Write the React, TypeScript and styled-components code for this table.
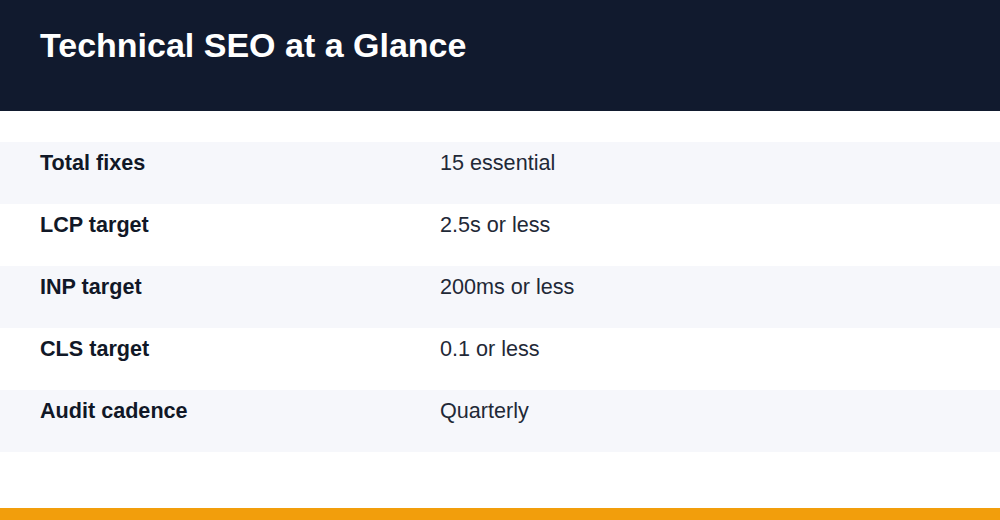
import React from "react";
import styled, { createGlobalStyle } from "styled-components";

const Global = createGlobalStyle`
  html, body { margin: 0; padding: 0; background: #ffffff; }
  body { font-family: "Liberation Sans", Arial, sans-serif; }
`;

const Page = styled.div`
  width: 1000px;
  height: 520px;
  display: flex;
  flex-direction: column;
  background: #ffffff;
  overflow: hidden;
`;

const Header = styled.header`
  height: 111px;
  box-sizing: border-box;
  padding: 26px 40px 0;
  background: #111a2e;
  flex-shrink: 0;
`;

const Title = styled.h1`
  margin: 0;
  font-size: 34px;
  line-height: normal;
  font-weight: 700;
  color: #ffffff;
`;

const Table = styled.div`
  margin-top: 31px;
  display: flex;
  flex-direction: column;
  flex: 1;
`;

const Row = styled.div<{ $shaded: boolean }>`
  height: 62px;
  box-sizing: border-box;
  padding: 9px 40px 0;
  display: grid;
  grid-template-columns: 400px 1fr;
  align-items: start;
  background: ${(p) => (p.$shaded ? "#f6f7fb" : "#ffffff")};
  font-size: 21.6px;
  line-height: 24px;
`;

const Label = styled.div`
  font-weight: 700;
  color: #111827;
`;

const Value = styled.div`
  color: #1f2937;
`;

const Accent = styled.div`
  height: 12px;
  background: #f29e0c;
  flex-shrink: 0;
`;

const rows = [
  ["Total fixes", "15 essential"],
  ["LCP target", "2.5s or less"],
  ["INP target", "200ms or less"],
  ["CLS target", "0.1 or less"],
  ["Audit cadence", "Quarterly"],
];

export default function App() {
  return (
    <>
      <Global />
      <Page>
        <Header>
          <Title>Technical SEO at a Glance</Title>
        </Header>
        <Table>
          {rows.map(([l, v], i) => (
            <Row key={l} $shaded={i % 2 === 0}>
              <Label>{l}</Label>
              <Value>{v}</Value>
            </Row>
          ))}
        </Table>
        <Accent />
      </Page>
    </>
  );
}
